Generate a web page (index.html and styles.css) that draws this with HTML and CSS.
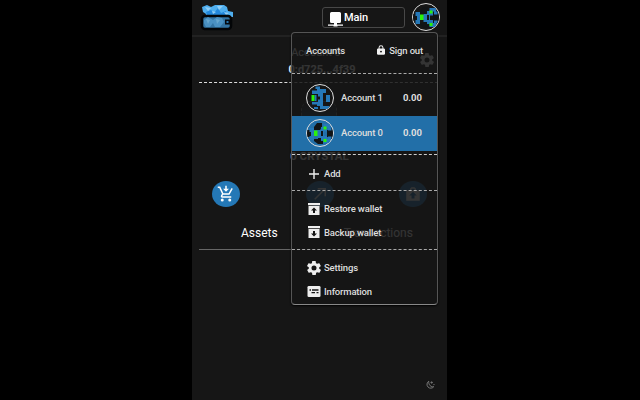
FILE: index.html
```html
<!DOCTYPE html>
<html lang="en">
<head>
<meta charset="utf-8">
<title>Wallet</title>
<link rel="stylesheet" href="styles.css">
</head>
<body>
<svg class="defs" width="0" height="0">
  <defs>
    <symbol id="gear" viewBox="2 2 20 20"><path d="M19.4 13c.1-.3.1-.6.1-1s0-.7-.1-1l2.100-1.600c.2-.1.2-.4.1-.6l-2-3.500c-.1-.2-.4-.3-.6-.2l-2.500 1c-.5-.4-1.100-.7-1.700-1l-.4-2.600c0-.3-.2-.5-.5-.5h-4c-.2 0-.4.2-.5.5l-.4 2.600c-.6.3-1.200.6-1.700 1l-2.500-1c-.2-.1-.5 0-.6.2l-2 3.500c-.1.2-.1.5.1.6L4.600 11c0 .3-.1.700-.1 1s0 .700.1 1l-2.100 1.600c-.2.1-.2.4-.1.6l2 3.500c.1.2.4.3.6.2l2.500-1c.5.4 1.100.7 1.700 1l.4 2.600c0 .3.2.5.5.5h4c.2 0 .5-.2.5-.5l.4-2.600c.6-.3 1.200-.6 1.700-1l2.500 1c.2.1.5 0 .6-.2l2-3.500c.1-.2.1-.5-.1-.6zM12 15.600a3.600 3.600 0 1 1 0-7.200 3.600 3.600 0 0 1 0 7.200z"/></symbol>
    <symbol id="face0" viewBox="1 1 26 26">
      <path fill="#111416" d="M8 8l3-4h5v4l-2 3H8zM1 11h4v7H1zM8 20h4v-2h3v4h2v3h-5l-4-3zM14.500 11.500H18V18h-3.500zM21 11h2V9h3l1 3v5l-1 3h-3v-2h-2z"/>
      <path fill="#2578b8" d="M3.500 9H8v3h3.500v-1H15v8h-3.500v-2H8v4H3.500v-4H5v-4H3.500zM15 8h2.500V5H24v3.500h-3v4h-3v4.500h3v3h3V24h-6.500v-3H15v-4h2v-5h-2zM22 8.500h3.500v3H22zM22 17.500h3.500v3H22z"/>
      <path fill="#2bf20b" d="M8 11.500h3.500V17H8zM17.500 7.500h3v3h-3zM17.500 20h3v3h-3z"/>
    </symbol>
    <symbol id="face1" viewBox="1 1 26 26">
      <path fill="#2578b8" d="M9.500 2.500H14v2.500H9.500zM6 6.500h5V5h9v4h-3v13h6.500v3H14v-3h-3v-1.500H6V18h6v-2.500h2v-3h-2V10H6zM8.500 11h2v6h-2zM20 11h4v7h-4zM8 23h4v2H8z"/>
      <path fill="#2bf20b" d="M5.500 11h3v6h-3z"/>
    </symbol>
  </defs>
</svg>
<div class="app">
  <header class="header">
    <svg class="logo" viewBox="0 0 34 28">
      <path fill="#4faeee" d="M2 4l5-2 4 2 4-2h9l3 2 1 4 5 1v5H5l1-3-3-2z"/>
      <path fill="#2388dc" d="M6 9l5-2 3 3 4-5 3 5 5-2 1 4H7z"/>
      <path fill="#91cdf4" d="M5 4l6 1-3 3zM17 3h6l-4 4zM12 8l4 1-3 2zM24 9l5 1-3 2z"/>
      <rect x="2" y="13" width="29" height="13" rx="3" fill="#3374a3" stroke="#030507" stroke-width="2.500"/>
      <path fill="#4a91c2" d="M4 17l4-3 5 3 4-3 5 1 2 4-4 5h-5l-2-4-3 4H6l-2-4z"/>
      <path fill="#68a7ce" d="M6 16l4 1-2 4zM16 16l4 1-3 4z"/>
      <path fill="#05090d" d="M25 16.500h5v5h-5z"/><path fill="#2775ad" d="M26.500 18h2v2h-2z"/>
    </svg>
    <div class="network">
      <svg class="net-icon" viewBox="0 0 15 15"><path fill="#fff" d="M3.500 0h8A1.500 1.500 0 0 1 13 1.500v8A1.500 1.500 0 0 1 11.500 11H9v1.500h6v1.200H9.500v.8h-4v-.8H0v-1.200h6V11H3.500A1.500 1.500 0 0 1 2 9.500v-8A1.500 1.500 0 0 1 3.500 0z"/></svg>
      <span>Main</span>
    </div>
    <div class="avatar"><svg viewBox="0 0 26 26"><use href="#face0"/></svg></div>
  </header>

  <main class="main">
    <section class="summary">
      <div class="summary-name">Account 0</div>
      <div class="summary-address">0:d725...4f39</div>
      <svg class="summary-gear"><use href="#gear"/></svg>
    </section>
    <section class="balance">
      <div class="coin"></div>
      <div class="amount">0 CRYSTAL</div>
    </section>
    <section class="actions">
      <div class="action"><svg viewBox="0 0 24 24"><path fill="#fff" d="M11 1h2v4h3l-4 4-4-4h3zM7 18a2 2 0 1 0 0 4 2 2 0 0 0 0-4zm10 0a2 2 0 1 0 0 4 2 2 0 0 0 0-4zM1 2h3.300l4.200 9h7l3.900-7 1.700 1-4.500 8H8.100L7 15h12v2H7c-1.500 0-2.500-1.600-1.700-3l1.300-2.400L3 4H1z"/></svg></div>
      <div class="action"><svg viewBox="0 0 24 24"><path fill="none" stroke="#fff" stroke-width="2" d="M5 19L18 6M9 5h10v10"/></svg></div>
      <div class="action"><svg viewBox="0 0 24 24"><path fill="#fff" fill-rule="evenodd" d="M3 7h5V5l2-2h4l2 2v2h5v14H3zm7-2v2h4V5zm2 4l-5 5h3v4h4v-4h3z"/></svg></div>
    </section>
    <nav class="tabs"><span>Assets</span><span>Transactions</span></nav>
  </main>
  <footer class="footer">
    <svg viewBox="0 0 12 12"><path fill="none" stroke="#888" d="M4.500 1.500a4.500 4.500 0 1 0 6 6.500C7.500 9 4 6 4.500 1.500z"/><path stroke="#777" d="M8 1.500v3M6.500 3h3M10 5.500h1.500"/></svg>
  </footer>

  <aside class="menu">
    <div class="menu-head">
      <span>Accounts</span>
      <span class="signout"><svg viewBox="0 0 10 12"><path fill="#f2f2f2" fill-rule="evenodd" d="M1 4h1V3a3 3 0 0 1 6 0v1h1l1 1v6l-1 1H1l-1-1V5zm2.200 0h3.600V3a1.800 1.800 0 0 0-3.600 0zM5 6.800a1.200 1.200 0 1 0 0 2.400 1.200 1.200 0 0 0 0-2.400z"/></svg>Sign out</span>
    </div>
    <div class="accounts">
      <div class="account"><div class="avatar"><svg viewBox="0 0 26 26"><use href="#face1"/></svg></div><span class="name">Account 1</span><b>0.00</b></div>
      <div class="account active"><div class="avatar"><svg viewBox="0 0 26 26"><use href="#face0"/></svg></div><span class="name">Account 0</span><b>0.00</b></div>
    </div>
    <div class="group add">
      <div class="item"><svg viewBox="0 0 14 14"><path stroke="#eee" stroke-width="1.400" d="M7 2v10M2 7h10"/></svg>Add</div>
    </div>
    <div class="group wallet">
      <div class="item"><svg viewBox="0 0 14 14"><path fill="#eee" fill-rule="evenodd" d="M1 1h12v2.300H1zM1.500 4h11v9h-11zM7 5.500L4 8.500h2v2.500h2V8.500h2z"/></svg>Restore wallet</div>
      <div class="item"><svg viewBox="0 0 14 14"><path fill="#eee" fill-rule="evenodd" d="M1 1h12v2.300H1zM1.500 4h11v9h-11zM7 11.500L4 8.500h2V6h2v2.500h2z"/></svg>Backup wallet</div>
    </div>
    <div class="group last">
      <div class="item"><svg><use href="#gear"/></svg>Settings</div>
      <div class="item"><svg viewBox="0 0 14 14"><rect x=".5" y="2" width="13" height="11" rx="1.300" fill="#eee"/><path stroke="#161616" stroke-width="1.300" d="M2.500 6h1.500M5 6h6.500M4.500 8.700H8M9.500 8.700h2"/></svg>Information</div>
    </div>
  </aside>
</div>
</body>
</html>
```
FILE: styles.css
```css
* { box-sizing: border-box; }
body {
  margin: 0;
  background: #000;
  color: #fff;
  font-family: Roboto, "Liberation Sans", sans-serif;
  overflow: hidden;
}
svg { display: block; flex: none; }
.defs { position: absolute; }
.app {
  position: relative;
  width: 255px;
  height: 400px;
  margin-left: 192px;
  background: #161616;
  display: flex;
  flex-direction: column;
}
.header {
  height: 37px;
  flex: none;
  display: flex;
  align-items: flex-start;
  border-bottom: 2px solid #222;
  padding: 3px 7px 0 8px;
}
.logo { width: 34px; height: 28px; margin-right: 88px; }
.network {
  width: 83px;
  height: 21px;
  margin: 4px 7px 0 0;
  border: 1px solid #484848;
  border-radius: 3px;
  display: flex;
  align-items: center;
  padding-left: 5px;
  font-size: 11px;
  font-weight: 500;
  letter-spacing: -.1px;
  gap: 1px;
}
.net-icon { width: 15px; height: 15px; margin-top: 3px; }
.avatar {
  width: 28px;
  height: 28px;
  flex: none;
  border: 1px solid #ddd;
  border-radius: 50%;
  overflow: hidden;
}
.avatar svg { width: 26px; height: 26px; }
.main { padding: 0 9px 0 7px; }
.summary {
  position: relative;
  height: 46px;
  border-bottom: 1px dashed #ddd;
  padding-top: 8px;
  text-align: center;
}
.summary-name { font-size: 11px; line-height: 15px; padding-right: 5px; }
.summary-address { font-size: 11px; font-weight: 700; line-height: 20px; padding-left: 7px; }
.summary-gear {
  position: absolute;
  right: 4px;
  top: 16px;
  width: 14px;
  height: 14px;
  fill: #fff;
}
.balance { height: 98px; padding-top: 18px; }
.coin {
  width: 36px;
  height: 36px;
  margin: 0 auto;
  border: 1px dashed #777;
  border-radius: 9px;
  background: linear-gradient(#161616, #1d6598);
}
.amount { margin-top: 10px; padding-left: 2px; text-align: center; font-size: 11.500px; font-weight: 700; line-height: 18px; }
.actions { display: flex; justify-content: space-between; padding: 0 11px 0 13px; }
.action {
  width: 28px;
  height: 26px;
  border-radius: 50%;
  background: #2478b6;
  display: grid;
  place-items: center;
}
.action svg { width: 18px; height: 18px; }
.tabs {
  display: flex;
  gap: 66px;
  padding-left: 42px;
  height: 43px;
  border-bottom: 1px solid #666;
  font-size: 12px;
  line-height: 52px;
}
.footer { margin-top: auto; padding: 0 12px 10px; display: flex; justify-content: flex-end; }
.footer svg { width: 10px; height: 10px; }
.menu {
  position: absolute;
  left: 99px;
  top: 32px;
  width: 147px;
  height: 273px;
  border: 1px solid #555;
  border-bottom-color: #888;
  border-radius: 4px;
  background: rgba(22, 22, 22, .87);
  box-shadow: 0 1px 2px #000;
  color: #ddd;
  font-size: 9.500px;
  font-weight: 500;
  letter-spacing: -.16px;
}
.menu-head {
  height: 41px;
  display: flex;
  justify-content: space-between;
  align-items: center;
  padding: 0 14px 6px;
  border-bottom: 1px dashed #aaa;
}
.signout { display: flex; align-items: center; gap: 4px; }
.signout svg { width: 8px; height: 10px; }
.accounts { height: 81px; padding-top: 6.500px; border-bottom: 1px dashed #ccc; }
.account { height: 35px; display: flex; align-items: center; padding: 0 15px 1px 14px; }
.account b { margin-left: auto; letter-spacing: 0; }
.account .name { margin-left: 7px; }
.active { background: #226fa8; }
.group { border-bottom: 1px dashed #aaa; padding-left: 15px; }
.add { height: 36px; padding-top: 7px; }
.wallet { height: 59px; padding-top: 6px; }
.last { border: 0; padding-top: 6px; }
.item { display: flex; align-items: center; height: 23.500px; gap: 3px; }
.item svg { width: 14px; height: 14px; fill: #eee; }
```
